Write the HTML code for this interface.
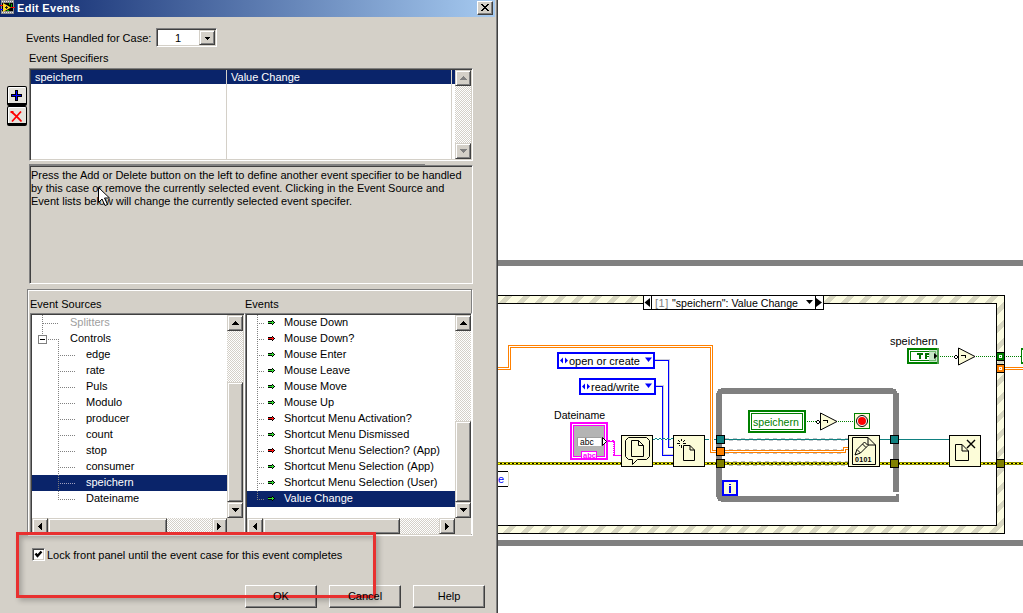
<!DOCTYPE html>
<html><head><meta charset="utf-8"><style>
*{margin:0;padding:0;box-sizing:border-box}
html,body{width:1023px;height:613px;overflow:hidden;background:#fff}
body{position:relative;font-family:"Liberation Sans",sans-serif;font-size:11px;color:#000}
.a{position:absolute}
.t{position:absolute;white-space:nowrap;line-height:13px}
#dlg{position:absolute;left:0;top:0;width:498px;height:613px;background:#d4d0c8;overflow:hidden}
#diag{position:absolute;left:498px;top:0;width:525px;height:613px;background:#fff;overflow:hidden}
#title{position:absolute;left:0;top:0;width:495px;height:17px;background:linear-gradient(to right,#0a246a,#a6caf0)}
.raised{background:#d4d0c8;border-style:solid;border-width:1px;border-color:#d4d0c8 #404040 #404040 #d4d0c8;box-shadow:inset 1px 1px 0 #fff,inset -1px -1px 0 #808080}
.sunken{border-style:solid;border-width:1px;border-color:#808080 #fff #fff #808080;box-shadow:inset 1px 1px 0 #404040,inset -1px -1px 0 #d4d0c8}
.track{background-image:repeating-conic-gradient(#fff 0 25%,#d4d0c8 0 50%);background-size:2px 2px}
.sel{background:#0a246a}
.btn{position:absolute;background:#d4d0c8;border-style:solid;border-width:1px;border-color:#fff #404040 #404040 #fff;box-shadow:inset -1px -1px 0 #808080;text-align:center;line-height:22px}
</style></head><body>
<div id="dlg">
  <div id="title"></div>
  <svg class="a" style="left:0;top:0" width="16" height="16" shape-rendering="crispEdges">
    <rect x="1" y="0" width="13" height="14" fill="#8c8c8c"/>
    <g fill="#e8e8f0"><rect x="2" y="1" width="1" height="1"/><rect x="4" y="1" width="1" height="1"/><rect x="6" y="1" width="1" height="1"/><rect x="8" y="1" width="1" height="1"/><rect x="10" y="1" width="1" height="1"/><rect x="12" y="1" width="1" height="1"/>
    <rect x="2" y="12" width="1" height="1"/><rect x="4" y="12" width="1" height="1"/><rect x="6" y="12" width="1" height="1"/><rect x="8" y="12" width="1" height="1"/><rect x="10" y="12" width="1" height="1"/><rect x="12" y="12" width="1" height="1"/></g>
    <rect x="2" y="3" width="11" height="8" fill="#000"/>
    <path d="M3 3 L11 7.5 L3 12 Z" fill="#ffd820" shape-rendering="auto"/>
    <rect x="6" y="6" width="1" height="3" fill="#222"/><rect x="5" y="7" width="3" height="1" fill="#222"/>
    <rect x="9" y="3" width="1" height="2" fill="#0a0"/><rect x="11" y="4" width="1" height="3" fill="#0a0"/><rect x="7" y="10" width="2" height="1" fill="#0a0"/>
    <rect x="0" y="5" width="3" height="1" fill="#f00"/><rect x="0" y="9" width="3" height="1" fill="#00f"/><rect x="11" y="7" width="4" height="1" fill="#f00"/>
  </svg>
  <div class="t" style="left:17px;top:2px;color:#fff;font-weight:bold;letter-spacing:0.3px">Edit Events</div>
  <div class="a" style="left:477px;top:1px;width:16px;height:14px;background:#d4d0c8;border-style:solid;border-width:1px;border-color:#fff #404040 #404040 #fff;box-shadow:inset -1px -1px 0 #808080"></div>
  <svg class="a" style="left:481px;top:4px" width="8" height="7" shape-rendering="crispEdges"><rect x="0" y="0" width="2" height="1"/><rect x="6" y="0" width="2" height="1"/><rect x="1" y="1" width="2" height="1"/><rect x="5" y="1" width="2" height="1"/><rect x="2" y="2" width="4" height="1"/><rect x="3" y="3" width="2" height="1"/><rect x="2" y="4" width="4" height="1"/><rect x="1" y="5" width="2" height="1"/><rect x="5" y="5" width="2" height="1"/><rect x="0" y="6" width="2" height="1"/><rect x="6" y="6" width="2" height="1"/></svg>
  <div class="a" style="left:495px;top:0;width:1px;height:613px;background:#d4d0c8"></div>
  <div class="a" style="left:496px;top:0;width:1px;height:613px;background:#808080"></div>
  <div class="a" style="left:497px;top:0;width:1px;height:613px;background:#404040"></div>

  <div class="t" style="left:26px;top:32px">Events Handled for Case:</div>
  <div class="a sunken" style="left:156px;top:28px;width:61px;height:19px;background:#fff"></div>
  <div class="t" style="left:175px;top:32px">1</div>
  <div class="a raised" style="left:199px;top:30px;width:16px;height:15px"></div>
  <div class="t" style="left:29px;top:52px">Event Specifiers</div>

  <div class="a" style="left:7px;top:86px;width:20px;height:20px;border:1px solid #000;border-bottom-width:3px;border-radius:2px;background:#e4e2dc;box-shadow:inset 1px 1px 0 #fff"></div>
  <div class="a" style="left:7px;top:106px;width:20px;height:20px;border:1px solid #000;border-bottom-width:3px;border-radius:2px;background:#e4e2dc;box-shadow:inset 1px 1px 0 #fff"></div>
  <svg class="a" style="left:0;top:0" width="30" height="130" shape-rendering="crispEdges"><path d="M15 90 h3 v4 h4 v3 h-4 v4 h-3 v-4 h-4 v-3 h4 z" fill="#000"/><path d="M16 91 h1 v4 h4 v1 h-4 v4 h-1 v-4 h-4 v-1 h4 z" fill="#0000ff"/></svg>
  <svg class="a" style="left:10px;top:110px" width="14" height="13"><path d="M1.5 2 Q5 4.5 11.5 11.5 M11 1.5 L2 11.5" stroke="#ff0000" stroke-width="1.8"/><rect x="0.5" y="1" width="3" height="2" fill="#ff0000"/></svg>

  <div class="a sunken" style="left:29px;top:68px;width:444px;height:93px;background:#fff"></div>
  <div class="a sel" style="left:31px;top:70px;width:424px;height:14px"></div>
  <div class="a" style="left:226px;top:70px;width:1px;height:89px;background:#d4d0c8"></div>
  <div class="a" style="left:451px;top:70px;width:1px;height:89px;background:#d4d0c8"></div>
  <div class="t" style="left:35px;top:71px;color:#fff">speichern</div>
  <div class="t" style="left:231px;top:71px;color:#fff">Value Change</div>
  <div class="a track" style="left:455px;top:70px;width:16px;height:89px"></div>
  <div class="a raised" style="left:455px;top:70px;width:16px;height:16px"></div>
  <div class="a raised" style="left:455px;top:143px;width:16px;height:16px"></div>

  <div class="a sunken" style="left:29px;top:165px;width:444px;height:119px;background:#d4d0c8"></div><div class="a" style="left:29px;top:164px;width:396px;height:1px;background:#808080"></div>
  <div class="t" style="left:31px;top:169px;line-height:13px">Press the Add or Delete button on the left to define another event specifier to be handled<br>by this case or remove the currently selected event. Clicking in the Event Source and<br>Event lists below will change the currently selected event specifer.</div>

  <div class="a" style="left:27px;top:289px;width:445px;height:246px;border:1px solid #808080;border-bottom-color:#d4d0c8;box-shadow:inset 1px 1px 0 #fff, 1px 1px 0 #fff"></div>
  <div class="t" style="left:30px;top:298px">Event Sources</div>
  <div class="t" style="left:245px;top:298px">Events</div>

  <div class="a sunken" style="left:30px;top:313px;width:215px;height:221px;background:#fff"></div><div class="a sel" style="left:32px;top:475px;width:195px;height:16px"></div><div class="t" style="left:70px;top:316px;color:#a0a0a0">Splitters</div><div class="t" style="left:70px;top:332px;color:#000">Controls</div><div class="t" style="left:86px;top:348px;color:#000">edge</div><div class="t" style="left:86px;top:364px;color:#000">rate</div><div class="t" style="left:86px;top:380px;color:#000">Puls</div><div class="t" style="left:86px;top:396px;color:#000">Modulo</div><div class="t" style="left:86px;top:412px;color:#000">producer</div><div class="t" style="left:86px;top:428px;color:#000">count</div><div class="t" style="left:86px;top:444px;color:#000">stop</div><div class="t" style="left:86px;top:460px;color:#000">consumer</div><div class="t" style="left:86px;top:476px;color:#fff">speichern</div><div class="t" style="left:86px;top:492px;color:#000">Dateiname</div><div class="a track" style="left:227px;top:315px;width:16px;height:203px"></div><div class="a raised" style="left:227px;top:315px;width:16px;height:16px;"></div><div class="a raised" style="left:227px;top:382px;width:16px;height:120px;"></div><div class="a raised" style="left:227px;top:502px;width:16px;height:16px;"></div><div class="a track" style="left:32px;top:518px;width:195px;height:16px"></div><div class="a raised" style="left:32px;top:518px;width:16px;height:16px;"></div><div class="a raised" style="left:48px;top:518px;width:119px;height:16px;"></div><div class="a raised" style="left:212px;top:518px;width:15px;height:16px;"></div><div class="a" style="left:227px;top:518px;width:16px;height:16px;background:#d4d0c8"></div><div class="a sunken" style="left:245px;top:313px;width:227px;height:221px;background:#fff"></div><div class="a sel" style="left:247px;top:491px;width:208px;height:16px"></div><svg class="a" style="left:268px;top:320px" width="7" height="5" shape-rendering="crispEdges"><rect x="4" y="0" width="1" height="1" fill="#000"/><rect x="0" y="1" width="1" height="1" fill="#000"/><rect x="1" y="1" width="1" height="1" fill="#000"/><rect x="2" y="1" width="1" height="1" fill="#000"/><rect x="3" y="1" width="1" height="1" fill="#000"/><rect x="4" y="1" width="1" height="1" fill="#33dd33"/><rect x="5" y="1" width="1" height="1" fill="#000"/><rect x="0" y="2" width="1" height="1" fill="#33dd33"/><rect x="1" y="2" width="1" height="1" fill="#33dd33"/><rect x="2" y="2" width="1" height="1" fill="#33dd33"/><rect x="3" y="2" width="1" height="1" fill="#33dd33"/><rect x="4" y="2" width="1" height="1" fill="#33dd33"/><rect x="5" y="2" width="1" height="1" fill="#33dd33"/><rect x="6" y="2" width="1" height="1" fill="#000"/><rect x="0" y="3" width="1" height="1" fill="#000"/><rect x="1" y="3" width="1" height="1" fill="#000"/><rect x="2" y="3" width="1" height="1" fill="#000"/><rect x="3" y="3" width="1" height="1" fill="#000"/><rect x="4" y="3" width="1" height="1" fill="#33dd33"/><rect x="5" y="3" width="1" height="1" fill="#000"/><rect x="4" y="4" width="1" height="1" fill="#000"/></svg><div class="t" style="left:284px;top:316px;color:#000">Mouse Down</div><svg class="a" style="left:268px;top:336px" width="7" height="5" shape-rendering="crispEdges"><rect x="4" y="0" width="1" height="1" fill="#000"/><rect x="0" y="1" width="1" height="1" fill="#000"/><rect x="1" y="1" width="1" height="1" fill="#000"/><rect x="2" y="1" width="1" height="1" fill="#000"/><rect x="3" y="1" width="1" height="1" fill="#000"/><rect x="4" y="1" width="1" height="1" fill="#ff1010"/><rect x="5" y="1" width="1" height="1" fill="#000"/><rect x="0" y="2" width="1" height="1" fill="#ff1010"/><rect x="1" y="2" width="1" height="1" fill="#ff1010"/><rect x="2" y="2" width="1" height="1" fill="#ff1010"/><rect x="3" y="2" width="1" height="1" fill="#ff1010"/><rect x="4" y="2" width="1" height="1" fill="#ff1010"/><rect x="5" y="2" width="1" height="1" fill="#ff1010"/><rect x="6" y="2" width="1" height="1" fill="#000"/><rect x="0" y="3" width="1" height="1" fill="#000"/><rect x="1" y="3" width="1" height="1" fill="#000"/><rect x="2" y="3" width="1" height="1" fill="#000"/><rect x="3" y="3" width="1" height="1" fill="#000"/><rect x="4" y="3" width="1" height="1" fill="#ff1010"/><rect x="5" y="3" width="1" height="1" fill="#000"/><rect x="4" y="4" width="1" height="1" fill="#000"/></svg><div class="t" style="left:284px;top:332px;color:#000">Mouse Down?</div><svg class="a" style="left:268px;top:352px" width="7" height="5" shape-rendering="crispEdges"><rect x="4" y="0" width="1" height="1" fill="#000"/><rect x="0" y="1" width="1" height="1" fill="#000"/><rect x="1" y="1" width="1" height="1" fill="#000"/><rect x="2" y="1" width="1" height="1" fill="#000"/><rect x="3" y="1" width="1" height="1" fill="#000"/><rect x="4" y="1" width="1" height="1" fill="#33dd33"/><rect x="5" y="1" width="1" height="1" fill="#000"/><rect x="0" y="2" width="1" height="1" fill="#33dd33"/><rect x="1" y="2" width="1" height="1" fill="#33dd33"/><rect x="2" y="2" width="1" height="1" fill="#33dd33"/><rect x="3" y="2" width="1" height="1" fill="#33dd33"/><rect x="4" y="2" width="1" height="1" fill="#33dd33"/><rect x="5" y="2" width="1" height="1" fill="#33dd33"/><rect x="6" y="2" width="1" height="1" fill="#000"/><rect x="0" y="3" width="1" height="1" fill="#000"/><rect x="1" y="3" width="1" height="1" fill="#000"/><rect x="2" y="3" width="1" height="1" fill="#000"/><rect x="3" y="3" width="1" height="1" fill="#000"/><rect x="4" y="3" width="1" height="1" fill="#33dd33"/><rect x="5" y="3" width="1" height="1" fill="#000"/><rect x="4" y="4" width="1" height="1" fill="#000"/></svg><div class="t" style="left:284px;top:348px;color:#000">Mouse Enter</div><svg class="a" style="left:268px;top:368px" width="7" height="5" shape-rendering="crispEdges"><rect x="4" y="0" width="1" height="1" fill="#000"/><rect x="0" y="1" width="1" height="1" fill="#000"/><rect x="1" y="1" width="1" height="1" fill="#000"/><rect x="2" y="1" width="1" height="1" fill="#000"/><rect x="3" y="1" width="1" height="1" fill="#000"/><rect x="4" y="1" width="1" height="1" fill="#33dd33"/><rect x="5" y="1" width="1" height="1" fill="#000"/><rect x="0" y="2" width="1" height="1" fill="#33dd33"/><rect x="1" y="2" width="1" height="1" fill="#33dd33"/><rect x="2" y="2" width="1" height="1" fill="#33dd33"/><rect x="3" y="2" width="1" height="1" fill="#33dd33"/><rect x="4" y="2" width="1" height="1" fill="#33dd33"/><rect x="5" y="2" width="1" height="1" fill="#33dd33"/><rect x="6" y="2" width="1" height="1" fill="#000"/><rect x="0" y="3" width="1" height="1" fill="#000"/><rect x="1" y="3" width="1" height="1" fill="#000"/><rect x="2" y="3" width="1" height="1" fill="#000"/><rect x="3" y="3" width="1" height="1" fill="#000"/><rect x="4" y="3" width="1" height="1" fill="#33dd33"/><rect x="5" y="3" width="1" height="1" fill="#000"/><rect x="4" y="4" width="1" height="1" fill="#000"/></svg><div class="t" style="left:284px;top:364px;color:#000">Mouse Leave</div><svg class="a" style="left:268px;top:384px" width="7" height="5" shape-rendering="crispEdges"><rect x="4" y="0" width="1" height="1" fill="#000"/><rect x="0" y="1" width="1" height="1" fill="#000"/><rect x="1" y="1" width="1" height="1" fill="#000"/><rect x="2" y="1" width="1" height="1" fill="#000"/><rect x="3" y="1" width="1" height="1" fill="#000"/><rect x="4" y="1" width="1" height="1" fill="#33dd33"/><rect x="5" y="1" width="1" height="1" fill="#000"/><rect x="0" y="2" width="1" height="1" fill="#33dd33"/><rect x="1" y="2" width="1" height="1" fill="#33dd33"/><rect x="2" y="2" width="1" height="1" fill="#33dd33"/><rect x="3" y="2" width="1" height="1" fill="#33dd33"/><rect x="4" y="2" width="1" height="1" fill="#33dd33"/><rect x="5" y="2" width="1" height="1" fill="#33dd33"/><rect x="6" y="2" width="1" height="1" fill="#000"/><rect x="0" y="3" width="1" height="1" fill="#000"/><rect x="1" y="3" width="1" height="1" fill="#000"/><rect x="2" y="3" width="1" height="1" fill="#000"/><rect x="3" y="3" width="1" height="1" fill="#000"/><rect x="4" y="3" width="1" height="1" fill="#33dd33"/><rect x="5" y="3" width="1" height="1" fill="#000"/><rect x="4" y="4" width="1" height="1" fill="#000"/></svg><div class="t" style="left:284px;top:380px;color:#000">Mouse Move</div><svg class="a" style="left:268px;top:400px" width="7" height="5" shape-rendering="crispEdges"><rect x="4" y="0" width="1" height="1" fill="#000"/><rect x="0" y="1" width="1" height="1" fill="#000"/><rect x="1" y="1" width="1" height="1" fill="#000"/><rect x="2" y="1" width="1" height="1" fill="#000"/><rect x="3" y="1" width="1" height="1" fill="#000"/><rect x="4" y="1" width="1" height="1" fill="#33dd33"/><rect x="5" y="1" width="1" height="1" fill="#000"/><rect x="0" y="2" width="1" height="1" fill="#33dd33"/><rect x="1" y="2" width="1" height="1" fill="#33dd33"/><rect x="2" y="2" width="1" height="1" fill="#33dd33"/><rect x="3" y="2" width="1" height="1" fill="#33dd33"/><rect x="4" y="2" width="1" height="1" fill="#33dd33"/><rect x="5" y="2" width="1" height="1" fill="#33dd33"/><rect x="6" y="2" width="1" height="1" fill="#000"/><rect x="0" y="3" width="1" height="1" fill="#000"/><rect x="1" y="3" width="1" height="1" fill="#000"/><rect x="2" y="3" width="1" height="1" fill="#000"/><rect x="3" y="3" width="1" height="1" fill="#000"/><rect x="4" y="3" width="1" height="1" fill="#33dd33"/><rect x="5" y="3" width="1" height="1" fill="#000"/><rect x="4" y="4" width="1" height="1" fill="#000"/></svg><div class="t" style="left:284px;top:396px;color:#000">Mouse Up</div><svg class="a" style="left:268px;top:416px" width="7" height="5" shape-rendering="crispEdges"><rect x="4" y="0" width="1" height="1" fill="#000"/><rect x="0" y="1" width="1" height="1" fill="#000"/><rect x="1" y="1" width="1" height="1" fill="#000"/><rect x="2" y="1" width="1" height="1" fill="#000"/><rect x="3" y="1" width="1" height="1" fill="#000"/><rect x="4" y="1" width="1" height="1" fill="#ff1010"/><rect x="5" y="1" width="1" height="1" fill="#000"/><rect x="0" y="2" width="1" height="1" fill="#ff1010"/><rect x="1" y="2" width="1" height="1" fill="#ff1010"/><rect x="2" y="2" width="1" height="1" fill="#ff1010"/><rect x="3" y="2" width="1" height="1" fill="#ff1010"/><rect x="4" y="2" width="1" height="1" fill="#ff1010"/><rect x="5" y="2" width="1" height="1" fill="#ff1010"/><rect x="6" y="2" width="1" height="1" fill="#000"/><rect x="0" y="3" width="1" height="1" fill="#000"/><rect x="1" y="3" width="1" height="1" fill="#000"/><rect x="2" y="3" width="1" height="1" fill="#000"/><rect x="3" y="3" width="1" height="1" fill="#000"/><rect x="4" y="3" width="1" height="1" fill="#ff1010"/><rect x="5" y="3" width="1" height="1" fill="#000"/><rect x="4" y="4" width="1" height="1" fill="#000"/></svg><div class="t" style="left:284px;top:412px;color:#000">Shortcut Menu Activation?</div><svg class="a" style="left:268px;top:432px" width="7" height="5" shape-rendering="crispEdges"><rect x="4" y="0" width="1" height="1" fill="#000"/><rect x="0" y="1" width="1" height="1" fill="#000"/><rect x="1" y="1" width="1" height="1" fill="#000"/><rect x="2" y="1" width="1" height="1" fill="#000"/><rect x="3" y="1" width="1" height="1" fill="#000"/><rect x="4" y="1" width="1" height="1" fill="#33dd33"/><rect x="5" y="1" width="1" height="1" fill="#000"/><rect x="0" y="2" width="1" height="1" fill="#33dd33"/><rect x="1" y="2" width="1" height="1" fill="#33dd33"/><rect x="2" y="2" width="1" height="1" fill="#33dd33"/><rect x="3" y="2" width="1" height="1" fill="#33dd33"/><rect x="4" y="2" width="1" height="1" fill="#33dd33"/><rect x="5" y="2" width="1" height="1" fill="#33dd33"/><rect x="6" y="2" width="1" height="1" fill="#000"/><rect x="0" y="3" width="1" height="1" fill="#000"/><rect x="1" y="3" width="1" height="1" fill="#000"/><rect x="2" y="3" width="1" height="1" fill="#000"/><rect x="3" y="3" width="1" height="1" fill="#000"/><rect x="4" y="3" width="1" height="1" fill="#33dd33"/><rect x="5" y="3" width="1" height="1" fill="#000"/><rect x="4" y="4" width="1" height="1" fill="#000"/></svg><div class="t" style="left:284px;top:428px;color:#000">Shortcut Menu Dismissed</div><svg class="a" style="left:268px;top:448px" width="7" height="5" shape-rendering="crispEdges"><rect x="4" y="0" width="1" height="1" fill="#000"/><rect x="0" y="1" width="1" height="1" fill="#000"/><rect x="1" y="1" width="1" height="1" fill="#000"/><rect x="2" y="1" width="1" height="1" fill="#000"/><rect x="3" y="1" width="1" height="1" fill="#000"/><rect x="4" y="1" width="1" height="1" fill="#ff1010"/><rect x="5" y="1" width="1" height="1" fill="#000"/><rect x="0" y="2" width="1" height="1" fill="#ff1010"/><rect x="1" y="2" width="1" height="1" fill="#ff1010"/><rect x="2" y="2" width="1" height="1" fill="#ff1010"/><rect x="3" y="2" width="1" height="1" fill="#ff1010"/><rect x="4" y="2" width="1" height="1" fill="#ff1010"/><rect x="5" y="2" width="1" height="1" fill="#ff1010"/><rect x="6" y="2" width="1" height="1" fill="#000"/><rect x="0" y="3" width="1" height="1" fill="#000"/><rect x="1" y="3" width="1" height="1" fill="#000"/><rect x="2" y="3" width="1" height="1" fill="#000"/><rect x="3" y="3" width="1" height="1" fill="#000"/><rect x="4" y="3" width="1" height="1" fill="#ff1010"/><rect x="5" y="3" width="1" height="1" fill="#000"/><rect x="4" y="4" width="1" height="1" fill="#000"/></svg><div class="t" style="left:284px;top:444px;color:#000">Shortcut Menu Selection? (App)</div><svg class="a" style="left:268px;top:464px" width="7" height="5" shape-rendering="crispEdges"><rect x="4" y="0" width="1" height="1" fill="#000"/><rect x="0" y="1" width="1" height="1" fill="#000"/><rect x="1" y="1" width="1" height="1" fill="#000"/><rect x="2" y="1" width="1" height="1" fill="#000"/><rect x="3" y="1" width="1" height="1" fill="#000"/><rect x="4" y="1" width="1" height="1" fill="#33dd33"/><rect x="5" y="1" width="1" height="1" fill="#000"/><rect x="0" y="2" width="1" height="1" fill="#33dd33"/><rect x="1" y="2" width="1" height="1" fill="#33dd33"/><rect x="2" y="2" width="1" height="1" fill="#33dd33"/><rect x="3" y="2" width="1" height="1" fill="#33dd33"/><rect x="4" y="2" width="1" height="1" fill="#33dd33"/><rect x="5" y="2" width="1" height="1" fill="#33dd33"/><rect x="6" y="2" width="1" height="1" fill="#000"/><rect x="0" y="3" width="1" height="1" fill="#000"/><rect x="1" y="3" width="1" height="1" fill="#000"/><rect x="2" y="3" width="1" height="1" fill="#000"/><rect x="3" y="3" width="1" height="1" fill="#000"/><rect x="4" y="3" width="1" height="1" fill="#33dd33"/><rect x="5" y="3" width="1" height="1" fill="#000"/><rect x="4" y="4" width="1" height="1" fill="#000"/></svg><div class="t" style="left:284px;top:460px;color:#000">Shortcut Menu Selection (App)</div><svg class="a" style="left:268px;top:480px" width="7" height="5" shape-rendering="crispEdges"><rect x="4" y="0" width="1" height="1" fill="#000"/><rect x="0" y="1" width="1" height="1" fill="#000"/><rect x="1" y="1" width="1" height="1" fill="#000"/><rect x="2" y="1" width="1" height="1" fill="#000"/><rect x="3" y="1" width="1" height="1" fill="#000"/><rect x="4" y="1" width="1" height="1" fill="#33dd33"/><rect x="5" y="1" width="1" height="1" fill="#000"/><rect x="0" y="2" width="1" height="1" fill="#33dd33"/><rect x="1" y="2" width="1" height="1" fill="#33dd33"/><rect x="2" y="2" width="1" height="1" fill="#33dd33"/><rect x="3" y="2" width="1" height="1" fill="#33dd33"/><rect x="4" y="2" width="1" height="1" fill="#33dd33"/><rect x="5" y="2" width="1" height="1" fill="#33dd33"/><rect x="6" y="2" width="1" height="1" fill="#000"/><rect x="0" y="3" width="1" height="1" fill="#000"/><rect x="1" y="3" width="1" height="1" fill="#000"/><rect x="2" y="3" width="1" height="1" fill="#000"/><rect x="3" y="3" width="1" height="1" fill="#000"/><rect x="4" y="3" width="1" height="1" fill="#33dd33"/><rect x="5" y="3" width="1" height="1" fill="#000"/><rect x="4" y="4" width="1" height="1" fill="#000"/></svg><div class="t" style="left:284px;top:476px;color:#000">Shortcut Menu Selection (User)</div><svg class="a" style="left:268px;top:496px" width="7" height="5" shape-rendering="crispEdges"><rect x="4" y="0" width="1" height="1" fill="#000"/><rect x="0" y="1" width="1" height="1" fill="#000"/><rect x="1" y="1" width="1" height="1" fill="#000"/><rect x="2" y="1" width="1" height="1" fill="#000"/><rect x="3" y="1" width="1" height="1" fill="#000"/><rect x="4" y="1" width="1" height="1" fill="#33dd33"/><rect x="5" y="1" width="1" height="1" fill="#000"/><rect x="0" y="2" width="1" height="1" fill="#33dd33"/><rect x="1" y="2" width="1" height="1" fill="#33dd33"/><rect x="2" y="2" width="1" height="1" fill="#33dd33"/><rect x="3" y="2" width="1" height="1" fill="#33dd33"/><rect x="4" y="2" width="1" height="1" fill="#33dd33"/><rect x="5" y="2" width="1" height="1" fill="#33dd33"/><rect x="6" y="2" width="1" height="1" fill="#000"/><rect x="0" y="3" width="1" height="1" fill="#000"/><rect x="1" y="3" width="1" height="1" fill="#000"/><rect x="2" y="3" width="1" height="1" fill="#000"/><rect x="3" y="3" width="1" height="1" fill="#000"/><rect x="4" y="3" width="1" height="1" fill="#33dd33"/><rect x="5" y="3" width="1" height="1" fill="#000"/><rect x="4" y="4" width="1" height="1" fill="#000"/></svg><div class="t" style="left:284px;top:492px;color:#fff">Value Change</div><div class="a track" style="left:455px;top:315px;width:16px;height:203px"></div><div class="a raised" style="left:455px;top:315px;width:16px;height:16px;"></div><div class="a raised" style="left:455px;top:421px;width:16px;height:81px;"></div><div class="a raised" style="left:455px;top:502px;width:16px;height:16px;"></div><div class="a track" style="left:247px;top:518px;width:208px;height:16px"></div><div class="a raised" style="left:247px;top:518px;width:16px;height:16px;"></div><div class="a raised" style="left:263px;top:518px;width:137px;height:16px;"></div><div class="a raised" style="left:439px;top:518px;width:16px;height:16px;"></div><div class="a" style="left:455px;top:518px;width:16px;height:16px;background:#d4d0c8"></div><svg class="a" style="left:0;top:0" width="498" height="613" shape-rendering="crispEdges"><rect x="42" y="315" width="1" height="1" fill="#808080"/><rect x="42" y="317" width="1" height="1" fill="#808080"/><rect x="42" y="319" width="1" height="1" fill="#808080"/><rect x="42" y="321" width="1" height="1" fill="#808080"/><rect x="42" y="323" width="1" height="1" fill="#808080"/><rect x="42" y="325" width="1" height="1" fill="#808080"/><rect x="42" y="327" width="1" height="1" fill="#808080"/><rect x="42" y="329" width="1" height="1" fill="#808080"/><rect x="42" y="331" width="1" height="1" fill="#808080"/><rect x="42" y="333" width="1" height="1" fill="#808080"/><rect x="43" y="323" width="1" height="1" fill="#808080"/><rect x="45" y="323" width="1" height="1" fill="#808080"/><rect x="47" y="323" width="1" height="1" fill="#808080"/><rect x="49" y="323" width="1" height="1" fill="#808080"/><rect x="51" y="323" width="1" height="1" fill="#808080"/><rect x="53" y="323" width="1" height="1" fill="#808080"/><rect x="55" y="323" width="1" height="1" fill="#808080"/><rect x="57" y="323" width="1" height="1" fill="#808080"/><rect x="38.5" y="335.5" width="8" height="8" fill="#fff" stroke="#808080" stroke-width="1"/><rect x="40" y="339" width="5" height="1" fill="#000"/><rect x="48" y="339" width="1" height="1" fill="#808080"/><rect x="50" y="339" width="1" height="1" fill="#808080"/><rect x="52" y="339" width="1" height="1" fill="#808080"/><rect x="54" y="339" width="1" height="1" fill="#808080"/><rect x="56" y="339" width="1" height="1" fill="#808080"/><rect x="58" y="339" width="1" height="1" fill="#808080"/><rect x="58" y="341" width="1" height="1" fill="#808080"/><rect x="58" y="343" width="1" height="1" fill="#808080"/><rect x="58" y="345" width="1" height="1" fill="#808080"/><rect x="58" y="347" width="1" height="1" fill="#808080"/><rect x="58" y="349" width="1" height="1" fill="#808080"/><rect x="58" y="351" width="1" height="1" fill="#808080"/><rect x="58" y="353" width="1" height="1" fill="#808080"/><rect x="58" y="355" width="1" height="1" fill="#808080"/><rect x="58" y="357" width="1" height="1" fill="#808080"/><rect x="58" y="359" width="1" height="1" fill="#808080"/><rect x="58" y="361" width="1" height="1" fill="#808080"/><rect x="58" y="363" width="1" height="1" fill="#808080"/><rect x="58" y="365" width="1" height="1" fill="#808080"/><rect x="58" y="367" width="1" height="1" fill="#808080"/><rect x="58" y="369" width="1" height="1" fill="#808080"/><rect x="58" y="371" width="1" height="1" fill="#808080"/><rect x="58" y="373" width="1" height="1" fill="#808080"/><rect x="58" y="375" width="1" height="1" fill="#808080"/><rect x="58" y="377" width="1" height="1" fill="#808080"/><rect x="58" y="379" width="1" height="1" fill="#808080"/><rect x="58" y="381" width="1" height="1" fill="#808080"/><rect x="58" y="383" width="1" height="1" fill="#808080"/><rect x="58" y="385" width="1" height="1" fill="#808080"/><rect x="58" y="387" width="1" height="1" fill="#808080"/><rect x="58" y="389" width="1" height="1" fill="#808080"/><rect x="58" y="391" width="1" height="1" fill="#808080"/><rect x="58" y="393" width="1" height="1" fill="#808080"/><rect x="58" y="395" width="1" height="1" fill="#808080"/><rect x="58" y="397" width="1" height="1" fill="#808080"/><rect x="58" y="399" width="1" height="1" fill="#808080"/><rect x="58" y="401" width="1" height="1" fill="#808080"/><rect x="58" y="403" width="1" height="1" fill="#808080"/><rect x="58" y="405" width="1" height="1" fill="#808080"/><rect x="58" y="407" width="1" height="1" fill="#808080"/><rect x="58" y="409" width="1" height="1" fill="#808080"/><rect x="58" y="411" width="1" height="1" fill="#808080"/><rect x="58" y="413" width="1" height="1" fill="#808080"/><rect x="58" y="415" width="1" height="1" fill="#808080"/><rect x="58" y="417" width="1" height="1" fill="#808080"/><rect x="58" y="419" width="1" height="1" fill="#808080"/><rect x="58" y="421" width="1" height="1" fill="#808080"/><rect x="58" y="423" width="1" height="1" fill="#808080"/><rect x="58" y="425" width="1" height="1" fill="#808080"/><rect x="58" y="427" width="1" height="1" fill="#808080"/><rect x="58" y="429" width="1" height="1" fill="#808080"/><rect x="58" y="431" width="1" height="1" fill="#808080"/><rect x="58" y="433" width="1" height="1" fill="#808080"/><rect x="58" y="435" width="1" height="1" fill="#808080"/><rect x="58" y="437" width="1" height="1" fill="#808080"/><rect x="58" y="439" width="1" height="1" fill="#808080"/><rect x="58" y="441" width="1" height="1" fill="#808080"/><rect x="58" y="443" width="1" height="1" fill="#808080"/><rect x="58" y="445" width="1" height="1" fill="#808080"/><rect x="58" y="447" width="1" height="1" fill="#808080"/><rect x="58" y="449" width="1" height="1" fill="#808080"/><rect x="58" y="451" width="1" height="1" fill="#808080"/><rect x="58" y="453" width="1" height="1" fill="#808080"/><rect x="58" y="455" width="1" height="1" fill="#808080"/><rect x="58" y="457" width="1" height="1" fill="#808080"/><rect x="58" y="459" width="1" height="1" fill="#808080"/><rect x="58" y="461" width="1" height="1" fill="#808080"/><rect x="58" y="463" width="1" height="1" fill="#808080"/><rect x="58" y="465" width="1" height="1" fill="#808080"/><rect x="58" y="467" width="1" height="1" fill="#808080"/><rect x="58" y="469" width="1" height="1" fill="#808080"/><rect x="58" y="471" width="1" height="1" fill="#808080"/><rect x="58" y="473" width="1" height="1" fill="#808080"/><rect x="58" y="475" width="1" height="1" fill="#808080"/><rect x="58" y="477" width="1" height="1" fill="#808080"/><rect x="58" y="479" width="1" height="1" fill="#808080"/><rect x="58" y="481" width="1" height="1" fill="#808080"/><rect x="58" y="483" width="1" height="1" fill="#808080"/><rect x="58" y="485" width="1" height="1" fill="#808080"/><rect x="58" y="487" width="1" height="1" fill="#808080"/><rect x="58" y="489" width="1" height="1" fill="#808080"/><rect x="58" y="491" width="1" height="1" fill="#808080"/><rect x="58" y="493" width="1" height="1" fill="#808080"/><rect x="58" y="495" width="1" height="1" fill="#808080"/><rect x="58" y="497" width="1" height="1" fill="#808080"/><rect x="58" y="499" width="1" height="1" fill="#808080"/><rect x="60" y="355" width="1" height="1" fill="#808080"/><rect x="62" y="355" width="1" height="1" fill="#808080"/><rect x="64" y="355" width="1" height="1" fill="#808080"/><rect x="66" y="355" width="1" height="1" fill="#808080"/><rect x="68" y="355" width="1" height="1" fill="#808080"/><rect x="70" y="355" width="1" height="1" fill="#808080"/><rect x="72" y="355" width="1" height="1" fill="#808080"/><rect x="74" y="355" width="1" height="1" fill="#808080"/><rect x="60" y="371" width="1" height="1" fill="#808080"/><rect x="62" y="371" width="1" height="1" fill="#808080"/><rect x="64" y="371" width="1" height="1" fill="#808080"/><rect x="66" y="371" width="1" height="1" fill="#808080"/><rect x="68" y="371" width="1" height="1" fill="#808080"/><rect x="70" y="371" width="1" height="1" fill="#808080"/><rect x="72" y="371" width="1" height="1" fill="#808080"/><rect x="74" y="371" width="1" height="1" fill="#808080"/><rect x="60" y="387" width="1" height="1" fill="#808080"/><rect x="62" y="387" width="1" height="1" fill="#808080"/><rect x="64" y="387" width="1" height="1" fill="#808080"/><rect x="66" y="387" width="1" height="1" fill="#808080"/><rect x="68" y="387" width="1" height="1" fill="#808080"/><rect x="70" y="387" width="1" height="1" fill="#808080"/><rect x="72" y="387" width="1" height="1" fill="#808080"/><rect x="74" y="387" width="1" height="1" fill="#808080"/><rect x="60" y="403" width="1" height="1" fill="#808080"/><rect x="62" y="403" width="1" height="1" fill="#808080"/><rect x="64" y="403" width="1" height="1" fill="#808080"/><rect x="66" y="403" width="1" height="1" fill="#808080"/><rect x="68" y="403" width="1" height="1" fill="#808080"/><rect x="70" y="403" width="1" height="1" fill="#808080"/><rect x="72" y="403" width="1" height="1" fill="#808080"/><rect x="74" y="403" width="1" height="1" fill="#808080"/><rect x="60" y="419" width="1" height="1" fill="#808080"/><rect x="62" y="419" width="1" height="1" fill="#808080"/><rect x="64" y="419" width="1" height="1" fill="#808080"/><rect x="66" y="419" width="1" height="1" fill="#808080"/><rect x="68" y="419" width="1" height="1" fill="#808080"/><rect x="70" y="419" width="1" height="1" fill="#808080"/><rect x="72" y="419" width="1" height="1" fill="#808080"/><rect x="74" y="419" width="1" height="1" fill="#808080"/><rect x="60" y="435" width="1" height="1" fill="#808080"/><rect x="62" y="435" width="1" height="1" fill="#808080"/><rect x="64" y="435" width="1" height="1" fill="#808080"/><rect x="66" y="435" width="1" height="1" fill="#808080"/><rect x="68" y="435" width="1" height="1" fill="#808080"/><rect x="70" y="435" width="1" height="1" fill="#808080"/><rect x="72" y="435" width="1" height="1" fill="#808080"/><rect x="74" y="435" width="1" height="1" fill="#808080"/><rect x="60" y="451" width="1" height="1" fill="#808080"/><rect x="62" y="451" width="1" height="1" fill="#808080"/><rect x="64" y="451" width="1" height="1" fill="#808080"/><rect x="66" y="451" width="1" height="1" fill="#808080"/><rect x="68" y="451" width="1" height="1" fill="#808080"/><rect x="70" y="451" width="1" height="1" fill="#808080"/><rect x="72" y="451" width="1" height="1" fill="#808080"/><rect x="74" y="451" width="1" height="1" fill="#808080"/><rect x="60" y="467" width="1" height="1" fill="#808080"/><rect x="62" y="467" width="1" height="1" fill="#808080"/><rect x="64" y="467" width="1" height="1" fill="#808080"/><rect x="66" y="467" width="1" height="1" fill="#808080"/><rect x="68" y="467" width="1" height="1" fill="#808080"/><rect x="70" y="467" width="1" height="1" fill="#808080"/><rect x="72" y="467" width="1" height="1" fill="#808080"/><rect x="74" y="467" width="1" height="1" fill="#808080"/><rect x="60" y="483" width="1" height="1" fill="#a0a0c0"/><rect x="62" y="483" width="1" height="1" fill="#a0a0c0"/><rect x="64" y="483" width="1" height="1" fill="#a0a0c0"/><rect x="66" y="483" width="1" height="1" fill="#a0a0c0"/><rect x="68" y="483" width="1" height="1" fill="#a0a0c0"/><rect x="70" y="483" width="1" height="1" fill="#a0a0c0"/><rect x="72" y="483" width="1" height="1" fill="#a0a0c0"/><rect x="74" y="483" width="1" height="1" fill="#a0a0c0"/><rect x="60" y="499" width="1" height="1" fill="#808080"/><rect x="62" y="499" width="1" height="1" fill="#808080"/><rect x="64" y="499" width="1" height="1" fill="#808080"/><rect x="66" y="499" width="1" height="1" fill="#808080"/><rect x="68" y="499" width="1" height="1" fill="#808080"/><rect x="70" y="499" width="1" height="1" fill="#808080"/><rect x="72" y="499" width="1" height="1" fill="#808080"/><rect x="74" y="499" width="1" height="1" fill="#808080"/><rect x="257" y="315" width="1" height="1" fill="#808080"/><rect x="257" y="317" width="1" height="1" fill="#808080"/><rect x="257" y="319" width="1" height="1" fill="#808080"/><rect x="257" y="321" width="1" height="1" fill="#808080"/><rect x="257" y="323" width="1" height="1" fill="#808080"/><rect x="257" y="325" width="1" height="1" fill="#808080"/><rect x="257" y="327" width="1" height="1" fill="#808080"/><rect x="257" y="329" width="1" height="1" fill="#808080"/><rect x="257" y="331" width="1" height="1" fill="#808080"/><rect x="257" y="333" width="1" height="1" fill="#808080"/><rect x="257" y="335" width="1" height="1" fill="#808080"/><rect x="257" y="337" width="1" height="1" fill="#808080"/><rect x="257" y="339" width="1" height="1" fill="#808080"/><rect x="257" y="341" width="1" height="1" fill="#808080"/><rect x="257" y="343" width="1" height="1" fill="#808080"/><rect x="257" y="345" width="1" height="1" fill="#808080"/><rect x="257" y="347" width="1" height="1" fill="#808080"/><rect x="257" y="349" width="1" height="1" fill="#808080"/><rect x="257" y="351" width="1" height="1" fill="#808080"/><rect x="257" y="353" width="1" height="1" fill="#808080"/><rect x="257" y="355" width="1" height="1" fill="#808080"/><rect x="257" y="357" width="1" height="1" fill="#808080"/><rect x="257" y="359" width="1" height="1" fill="#808080"/><rect x="257" y="361" width="1" height="1" fill="#808080"/><rect x="257" y="363" width="1" height="1" fill="#808080"/><rect x="257" y="365" width="1" height="1" fill="#808080"/><rect x="257" y="367" width="1" height="1" fill="#808080"/><rect x="257" y="369" width="1" height="1" fill="#808080"/><rect x="257" y="371" width="1" height="1" fill="#808080"/><rect x="257" y="373" width="1" height="1" fill="#808080"/><rect x="257" y="375" width="1" height="1" fill="#808080"/><rect x="257" y="377" width="1" height="1" fill="#808080"/><rect x="257" y="379" width="1" height="1" fill="#808080"/><rect x="257" y="381" width="1" height="1" fill="#808080"/><rect x="257" y="383" width="1" height="1" fill="#808080"/><rect x="257" y="385" width="1" height="1" fill="#808080"/><rect x="257" y="387" width="1" height="1" fill="#808080"/><rect x="257" y="389" width="1" height="1" fill="#808080"/><rect x="257" y="391" width="1" height="1" fill="#808080"/><rect x="257" y="393" width="1" height="1" fill="#808080"/><rect x="257" y="395" width="1" height="1" fill="#808080"/><rect x="257" y="397" width="1" height="1" fill="#808080"/><rect x="257" y="399" width="1" height="1" fill="#808080"/><rect x="257" y="401" width="1" height="1" fill="#808080"/><rect x="257" y="403" width="1" height="1" fill="#808080"/><rect x="257" y="405" width="1" height="1" fill="#808080"/><rect x="257" y="407" width="1" height="1" fill="#808080"/><rect x="257" y="409" width="1" height="1" fill="#808080"/><rect x="257" y="411" width="1" height="1" fill="#808080"/><rect x="257" y="413" width="1" height="1" fill="#808080"/><rect x="257" y="415" width="1" height="1" fill="#808080"/><rect x="257" y="417" width="1" height="1" fill="#808080"/><rect x="257" y="419" width="1" height="1" fill="#808080"/><rect x="257" y="421" width="1" height="1" fill="#808080"/><rect x="257" y="423" width="1" height="1" fill="#808080"/><rect x="257" y="425" width="1" height="1" fill="#808080"/><rect x="257" y="427" width="1" height="1" fill="#808080"/><rect x="257" y="429" width="1" height="1" fill="#808080"/><rect x="257" y="431" width="1" height="1" fill="#808080"/><rect x="257" y="433" width="1" height="1" fill="#808080"/><rect x="257" y="435" width="1" height="1" fill="#808080"/><rect x="257" y="437" width="1" height="1" fill="#808080"/><rect x="257" y="439" width="1" height="1" fill="#808080"/><rect x="257" y="441" width="1" height="1" fill="#808080"/><rect x="257" y="443" width="1" height="1" fill="#808080"/><rect x="257" y="445" width="1" height="1" fill="#808080"/><rect x="257" y="447" width="1" height="1" fill="#808080"/><rect x="257" y="449" width="1" height="1" fill="#808080"/><rect x="257" y="451" width="1" height="1" fill="#808080"/><rect x="257" y="453" width="1" height="1" fill="#808080"/><rect x="257" y="455" width="1" height="1" fill="#808080"/><rect x="257" y="457" width="1" height="1" fill="#808080"/><rect x="257" y="459" width="1" height="1" fill="#808080"/><rect x="257" y="461" width="1" height="1" fill="#808080"/><rect x="257" y="463" width="1" height="1" fill="#808080"/><rect x="257" y="465" width="1" height="1" fill="#808080"/><rect x="257" y="467" width="1" height="1" fill="#808080"/><rect x="257" y="469" width="1" height="1" fill="#808080"/><rect x="257" y="471" width="1" height="1" fill="#808080"/><rect x="257" y="473" width="1" height="1" fill="#808080"/><rect x="257" y="475" width="1" height="1" fill="#808080"/><rect x="257" y="477" width="1" height="1" fill="#808080"/><rect x="257" y="479" width="1" height="1" fill="#808080"/><rect x="257" y="481" width="1" height="1" fill="#808080"/><rect x="257" y="483" width="1" height="1" fill="#808080"/><rect x="257" y="485" width="1" height="1" fill="#808080"/><rect x="257" y="487" width="1" height="1" fill="#808080"/><rect x="257" y="489" width="1" height="1" fill="#808080"/><rect x="257" y="491" width="1" height="1" fill="#808080"/><rect x="257" y="493" width="1" height="1" fill="#808080"/><rect x="257" y="495" width="1" height="1" fill="#808080"/><rect x="257" y="497" width="1" height="1" fill="#808080"/><rect x="257" y="499" width="1" height="1" fill="#808080"/><rect x="259" y="323" width="1" height="1" fill="#808080"/><rect x="261" y="323" width="1" height="1" fill="#808080"/><rect x="263" y="323" width="1" height="1" fill="#808080"/><rect x="259" y="339" width="1" height="1" fill="#808080"/><rect x="261" y="339" width="1" height="1" fill="#808080"/><rect x="263" y="339" width="1" height="1" fill="#808080"/><rect x="259" y="355" width="1" height="1" fill="#808080"/><rect x="261" y="355" width="1" height="1" fill="#808080"/><rect x="263" y="355" width="1" height="1" fill="#808080"/><rect x="259" y="371" width="1" height="1" fill="#808080"/><rect x="261" y="371" width="1" height="1" fill="#808080"/><rect x="263" y="371" width="1" height="1" fill="#808080"/><rect x="259" y="387" width="1" height="1" fill="#808080"/><rect x="261" y="387" width="1" height="1" fill="#808080"/><rect x="263" y="387" width="1" height="1" fill="#808080"/><rect x="259" y="403" width="1" height="1" fill="#808080"/><rect x="261" y="403" width="1" height="1" fill="#808080"/><rect x="263" y="403" width="1" height="1" fill="#808080"/><rect x="259" y="419" width="1" height="1" fill="#808080"/><rect x="261" y="419" width="1" height="1" fill="#808080"/><rect x="263" y="419" width="1" height="1" fill="#808080"/><rect x="259" y="435" width="1" height="1" fill="#808080"/><rect x="261" y="435" width="1" height="1" fill="#808080"/><rect x="263" y="435" width="1" height="1" fill="#808080"/><rect x="259" y="451" width="1" height="1" fill="#808080"/><rect x="261" y="451" width="1" height="1" fill="#808080"/><rect x="263" y="451" width="1" height="1" fill="#808080"/><rect x="259" y="467" width="1" height="1" fill="#808080"/><rect x="261" y="467" width="1" height="1" fill="#808080"/><rect x="263" y="467" width="1" height="1" fill="#808080"/><rect x="259" y="483" width="1" height="1" fill="#808080"/><rect x="261" y="483" width="1" height="1" fill="#808080"/><rect x="263" y="483" width="1" height="1" fill="#808080"/><rect x="259" y="499" width="1" height="1" fill="#808080"/><rect x="261" y="499" width="1" height="1" fill="#808080"/><rect x="263" y="499" width="1" height="1" fill="#808080"/></svg><svg class="a" style="left:0;top:0" width="498" height="613" shape-rendering="crispEdges"><rect x="232" y="324" width="7" height="1" fill="#000"/><rect x="233" y="323" width="5" height="1" fill="#000"/><rect x="234" y="322" width="3" height="1" fill="#000"/><rect x="235" y="321" width="1" height="1" fill="#000"/><rect x="232" y="508" width="7" height="1" fill="#000"/><rect x="233" y="509" width="5" height="1" fill="#000"/><rect x="234" y="510" width="3" height="1" fill="#000"/><rect x="235" y="511" width="1" height="1" fill="#000"/><rect x="41" y="523" width="1" height="7" fill="#000"/><rect x="40" y="524" width="1" height="5" fill="#000"/><rect x="39" y="525" width="1" height="3" fill="#000"/><rect x="38" y="526" width="1" height="1" fill="#000"/><rect x="217" y="523" width="1" height="7" fill="#000"/><rect x="218" y="524" width="1" height="5" fill="#000"/><rect x="219" y="525" width="1" height="3" fill="#000"/><rect x="220" y="526" width="1" height="1" fill="#000"/><rect x="460" y="324" width="7" height="1" fill="#000"/><rect x="461" y="323" width="5" height="1" fill="#000"/><rect x="462" y="322" width="3" height="1" fill="#000"/><rect x="463" y="321" width="1" height="1" fill="#000"/><rect x="460" y="508" width="7" height="1" fill="#000"/><rect x="461" y="509" width="5" height="1" fill="#000"/><rect x="462" y="510" width="3" height="1" fill="#000"/><rect x="463" y="511" width="1" height="1" fill="#000"/><rect x="256" y="523" width="1" height="7" fill="#000"/><rect x="255" y="524" width="1" height="5" fill="#000"/><rect x="254" y="525" width="1" height="3" fill="#000"/><rect x="253" y="526" width="1" height="1" fill="#000"/><rect x="445" y="523" width="1" height="7" fill="#000"/><rect x="446" y="524" width="1" height="5" fill="#000"/><rect x="447" y="525" width="1" height="3" fill="#000"/><rect x="448" y="526" width="1" height="1" fill="#000"/><rect x="460" y="79" width="7" height="1" fill="#808080"/><rect x="461" y="78" width="5" height="1" fill="#808080"/><rect x="462" y="77" width="3" height="1" fill="#808080"/><rect x="463" y="76" width="1" height="1" fill="#808080"/><rect x="460" y="149" width="7" height="1" fill="#808080"/><rect x="461" y="150" width="5" height="1" fill="#808080"/><rect x="462" y="151" width="3" height="1" fill="#808080"/><rect x="463" y="152" width="1" height="1" fill="#808080"/><rect x="205" y="37" width="5" height="1" fill="#000"/><rect x="206" y="38" width="3" height="1" fill="#000"/><rect x="207" y="39" width="1" height="1" fill="#000"/></svg>

  <svg class="a" style="left:97px;top:186px" width="14" height="22"><path d="M1.5 1.5 V16.5 L5 13 L8 19.5 L10.5 18.5 L7.5 12 H12.5 Z" fill="#fff" stroke="#000" stroke-width="1" stroke-linejoin="miter"/></svg>
  <div class="a sunken" style="left:32px;top:548px;width:13px;height:13px;background:#fff"></div>
  <svg class="a" style="left:34px;top:550px" width="9" height="9"><path d="M1.5 3.5 L3.5 6 L7.5 1.5" fill="none" stroke="#000" stroke-width="2.4"/></svg>
  <div class="t" style="left:47px;top:549px">Lock front panel until the event case for this event completes</div>

  <div class="btn" style="left:245px;top:585px;width:72px;height:23px"></div>
  <div class="btn" style="left:329px;top:585px;width:72px;height:23px"></div>
  <div class="btn" style="left:413px;top:585px;width:72px;height:23px"></div>

  <div class="a" style="left:16px;top:532px;width:360px;height:66px;border:3px solid #e83030;box-shadow:inset 3px 3px 5px rgba(0,0,0,0.22), 3px 3px 5px rgba(0,0,0,0.22)"></div>
  <div class="t" style="left:245px;top:590px;width:72px;text-align:center">OK</div>
  <div class="t" style="left:329px;top:590px;width:72px;text-align:center">Cancel</div>
  <div class="t" style="left:413px;top:590px;width:72px;text-align:center">Help</div>
</div>
<div id="diag"><svg class="a" style="left:0;top:0" width="525" height="613" viewBox="498 0 525 613" shape-rendering="crispEdges"><defs>
<pattern id="stripe" patternUnits="userSpaceOnUse" width="18" height="18" x="0" y="0">
<rect width="18" height="18" fill="#fcfce2"/>
<path d="M9 0 H16 L0 16 V9 Z M18 9 V16 L16 18 H9 Z" fill="#d8d7c1"/>
</pattern>
</defs><rect x="498" y="260" width="525" height="6" fill="#808080" /><rect x="498" y="540" width="525" height="6" fill="#808080" /><rect x="498" y="295" width="507" height="9" fill="url(#stripe)" /><rect x="498" y="525" width="507" height="9" fill="url(#stripe)" /><rect x="996" y="295" width="9" height="239" fill="url(#stripe)" /><rect x="498" y="295" width="507" height="1" fill="#000" /><rect x="498" y="303" width="499" height="1" fill="#000" /><rect x="498" y="525" width="499" height="1" fill="#000" /><rect x="498" y="533" width="507" height="1" fill="#000" /><rect x="1004" y="295" width="1" height="239" fill="#000" /><rect x="996" y="303" width="1" height="223" fill="#000" /><rect x="643" y="295" width="181" height="15" fill="#fff" /><path d="M643.5 295.5 H823.5 V309.5 H643.5 Z M651.5 295.5 V309.5 M815.5 295.5 V309.5" fill="none" stroke="#000" stroke-width="1"/><polygon points="644.5,302.5 650,298 650,307" fill="#000" shape-rendering="auto"/><polygon points="816,298 822,302.5 816,307" fill="#000" shape-rendering="auto"/><polygon points="806,300 813,300 809.5,304" fill="#000" shape-rendering="auto"/><path d="M498 367.5 H508.5 V345.5 H712.5 V450.5 H716" fill="none" stroke="#ff8000" stroke-width="1"/><path d="M498 369.5 H510.5 V347.5 H710.5 V452.5 H716" fill="none" stroke="#ff8000" stroke-width="1"/><path d="M655 359.5 H669.5 V446.5 H673 M656 385.5 H663.5 V454.5 H673" fill="none" stroke="#d0d0d8" stroke-width="1"/><path d="M655 360.5 H668.5 V447.5 H673" fill="none" stroke="#0000ff" stroke-width="1"/><path d="M656 386.5 H662.5 V455.5 H673" fill="none" stroke="#0000ff" stroke-width="1"/><path d="M607 441.5 H614.5 V455.5 H621" fill="none" stroke="#ff00ff" stroke-width="1"/><path d="M608 440.5 H614 M613 455.5 H621" fill="none" stroke="#ff00ff" stroke-width="1" stroke-dasharray="2 2"/><path d="M613.5 442 V456" fill="none" stroke="#ff00ff" stroke-width="1" stroke-dasharray="1 1"/><path d="M653 439.5 H673" fill="none" stroke="#108888" stroke-width="1" stroke-dasharray="2 2"/><path d="M655 438.5 H673" fill="none" stroke="#108888" stroke-width="1" stroke-dasharray="2 2"/><path d="M705 439.5 H709 M714 439.5 H716 M725 439.5 H848 M880 439.5 H949" fill="none" stroke="#0f8080" stroke-width="1"/><path d="M725 438.5 H848 M729 449.5 H843 M725 461.5 H848" fill="none" stroke="#c0c4c8" stroke-width="1" stroke-dasharray="4 4"/><path d="M729 440.5 H848 M725 453.5 H845 M729 465.5 H848" fill="none" stroke="#c0c4c8" stroke-width="1" stroke-dasharray="4 4"/><path d="M725 450.5 H843.5 V447.5 H848" fill="none" stroke="#ff8000" stroke-width="1"/><path d="M725 452.5 H845.5 V449.5 H848" fill="none" stroke="#ff8000" stroke-width="1"/><path d="M1005 367.5 H1023 M1005 369.5 H1023" fill="none" stroke="#ff8000" stroke-width="1"/><rect x="498" y="462" width="123" height="3" fill="#8c8c00" /><path d="M498 463.5 H621" stroke="#ffff00" stroke-width="1" stroke-dasharray="2 2"/><path d="M500 463.5 H621" stroke="#000" stroke-width="1" stroke-dasharray="2 2"/><rect x="653" y="462" width="20" height="3" fill="#8c8c00" /><path d="M653 463.5 H673" stroke="#ffff00" stroke-width="1" stroke-dasharray="2 2"/><path d="M655 463.5 H673" stroke="#000" stroke-width="1" stroke-dasharray="2 2"/><rect x="705" y="462" width="143" height="3" fill="#8c8c00" /><path d="M705 463.5 H848" stroke="#ffff00" stroke-width="1" stroke-dasharray="2 2"/><path d="M707 463.5 H848" stroke="#000" stroke-width="1" stroke-dasharray="2 2"/><rect x="880" y="462" width="69" height="3" fill="#8c8c00" /><path d="M880 463.5 H949" stroke="#ffff00" stroke-width="1" stroke-dasharray="2 2"/><path d="M882 463.5 H949" stroke="#000" stroke-width="1" stroke-dasharray="2 2"/><rect x="981" y="462" width="42" height="3" fill="#8c8c00" /><path d="M981 463.5 H1023" stroke="#ffff00" stroke-width="1" stroke-dasharray="2 2"/><path d="M983 463.5 H1023" stroke="#000" stroke-width="1" stroke-dasharray="2 2"/><path d="M940 356.5 H954 M976 356.5 H997 M1006 356.5 H1021" stroke="#008000" stroke-width="1" stroke-dasharray="1 1"/><path d="M807 421.5 H816 M838 421.5 H854" stroke="#008000" stroke-width="1" stroke-dasharray="1 1"/><rect x="557" y="352" width="98" height="17" fill="#0000ff" /><rect x="559" y="354" width="94" height="13" fill="#fff" /><rect x="579" y="378" width="77" height="17" fill="#0000ff" /><rect x="581" y="380" width="73" height="13" fill="#fff" /><g fill="#0000ff" shape-rendering="auto"><polygon points="560,360.5 563,357.5 563,363.5"/><polygon points="568,360.5 565,357.5 565,363.5"/><polygon points="645,357.5 652,357.5 648.5,362"/><polygon points="582,386.5 585,383.5 585,389.5"/><polygon points="590,386.5 587,383.5 587,389.5"/><polygon points="645,383.5 652,383.5 648.5,388"/></g><rect x="570" y="422" width="38" height="38" fill="#ff00ff" /><rect x="572" y="424" width="34" height="34" fill="#fff" /><rect x="573" y="425" width="32" height="32" fill="#ff00ff" /><rect x="574" y="426" width="30" height="30" fill="#b4b4b4" /><rect x="577" y="437" width="24" height="9" fill="#a0a0a0" /><rect x="578" y="438" width="23" height="8" fill="#fff" /><polygon points="602.5,437.5 606.5,441.5 602.5,445.5" fill="#fff" stroke="#000" stroke-width="1" shape-rendering="auto"/><rect x="581" y="451" width="16" height="8" fill="#ff00ff" /><rect x="582" y="452" width="14" height="6" fill="#fff" /><text x="580" y="444.5" font-family="Liberation Sans" font-size="8.5" fill="#000">abc</text><text x="583" y="457.5" font-family="Liberation Sans" font-size="7.5" font-weight="bold" fill="#ff00ff">abc</text><rect x="621" y="435" width="32" height="32" fill="#000" /><rect x="622" y="436" width="30" height="30" fill="#fcfcd8" /><rect x="673" y="435" width="32" height="32" fill="#000" /><rect x="674" y="436" width="30" height="30" fill="#fcfcd8" /><rect x="848" y="435" width="32" height="32" fill="#000" /><rect x="849" y="436" width="30" height="30" fill="#fcfcd8" /><rect x="949" y="435" width="32" height="32" fill="#000" /><rect x="950" y="436" width="30" height="30" fill="#fcfcd8" /><g fill="none" stroke="#000" stroke-width="1" shape-rendering="auto"><path d="M628.5 437.5 H646.5 L649.5 440.5 V456.5 L646.5 459.5 H637.5 L632.5 464.5 V459.5 H628.5 L625.5 456.5 V440.5 Z"/><path d="M631.5 440.5 H638.5 L643.5 445.5 V456.5 H631.5 Z M638.5 440.5 V445.5 H643.5"/><path d="M683.5 445.5 H690 L694.5 450 V460.5 H683.5 Z M690 445.5 V450 H694.5"/><path d="M852.5 437.5 H868 L875.5 445 V464.5 H852.5 Z M868 437.5 V445 H875.5"/><path d="M857 449.5 L864.5 442 L868 445.5 L860.5 453 Z M857 449.5 L855 455 L860.5 453 M862.5 444 L866 447.5"/><path d="M955.5 444.5 H962 L968.5 451 V460.5 H955.5 Z M962 444.5 V451 H968.5"/><path d="M967 440 L975 448 M975 440 L967 448" stroke-width="1.4"/></g><text x="855" y="462" font-family="Liberation Sans" font-size="7" font-weight="bold" fill="#000" letter-spacing="0.3">0101</text><rect x="721" y="388" width="172" height="1" fill="#808080" /><rect x="718" y="389" width="178" height="2" fill="#808080" /><rect x="717" y="391" width="180" height="2" fill="#808080" /><rect x="716" y="393" width="183" height="1" fill="#808080" /><rect x="716" y="393" width="6" height="103" fill="#808080" /><rect x="893" y="393" width="6" height="99" fill="#808080" /><rect x="716" y="496" width="183" height="1" fill="#808080" /><rect x="717" y="497" width="182" height="2" fill="#808080" /><rect x="718" y="499" width="181" height="2" fill="#808080" /><rect x="721" y="501" width="178" height="1" fill="#808080" /><rect x="896" y="494" width="3" height="2" fill="#808080" /><rect x="716" y="435" width="9" height="9" fill="#000" /><rect x="717" y="436" width="7" height="7" fill="#0f8080" /><rect x="716" y="447" width="9" height="9" fill="#000" /><rect x="717" y="448" width="7" height="7" fill="#ff8000" /><rect x="716" y="459" width="9" height="9" fill="#000" /><rect x="717" y="460" width="7" height="7" fill="#808000" /><rect x="890" y="435" width="9" height="9" fill="#000" /><rect x="891" y="436" width="7" height="7" fill="#0f8080" /><rect x="890" y="459" width="9" height="9" fill="#000" /><rect x="891" y="460" width="7" height="7" fill="#808000" /><rect x="996" y="352" width="9" height="9" fill="#000" /><rect x="997" y="353" width="7" height="7" fill="#008000" /><rect x="999" y="355" width="3" height="3" fill="#fff" /><rect x="1000" y="356" width="1" height="1" fill="#008000" /><rect x="996" y="364" width="9" height="9" fill="#000" /><rect x="997" y="365" width="7" height="7" fill="#ff8000" /><rect x="999" y="367" width="3" height="3" fill="#fff" /><rect x="1000" y="368" width="1" height="1" fill="#ff8000" /><rect x="996" y="459" width="9" height="9" fill="#000" /><rect x="997" y="460" width="7" height="7" fill="#808000" /><rect x="678" y="440" width="1" height="1" fill="#000" /><rect x="679" y="441" width="1" height="1" fill="#000" /><rect x="684" y="440" width="1" height="1" fill="#000" /><rect x="683" y="441" width="1" height="1" fill="#000" /><rect x="677" y="443" width="3" height="1" fill="#000" /><rect x="683" y="443" width="3" height="1" fill="#000" /><rect x="679" y="445" width="1" height="1" fill="#000" /><rect x="681" y="445" width="1" height="3" fill="#000" /><rect x="681" y="439" width="1" height="2" fill="#000" /><rect x="722" y="480" width="16" height="16" fill="#0000ff" /><rect x="724" y="482" width="12" height="12" fill="#fcfcd8" /><rect x="729" y="484" width="2" height="1" fill="#0000ff" /><rect x="729" y="486" width="2" height="7" fill="#0000ff" /><rect x="748" y="410" width="58" height="23" fill="#008000" /><rect x="750" y="412" width="54" height="19" fill="#fff" /><rect x="751" y="413" width="52" height="17" fill="#008000" /><rect x="752" y="414" width="50" height="15" fill="#fff" /><polygon points="820.5,413 837,421.5 820.5,430" fill="#fcfcd8" stroke="#000" stroke-width="1" shape-rendering="auto"/><rect x="817" y="420" width="2" height="1" fill="#000" /><rect x="817" y="423" width="2" height="1" fill="#000" /><rect x="816" y="421" width="1" height="2" fill="#000" /><rect x="819" y="421" width="1" height="2" fill="#000" /><rect x="817" y="421" width="2" height="2" fill="#fff" /><rect x="823" y="420" width="5" height="1" fill="#000" /><rect x="827" y="420" width="1" height="3" fill="#000" /><polygon points="958.5,348 975,356.5 958.5,365" fill="#fcfcd8" stroke="#000" stroke-width="1" shape-rendering="auto"/><rect x="955" y="355" width="2" height="1" fill="#000" /><rect x="955" y="358" width="2" height="1" fill="#000" /><rect x="954" y="356" width="1" height="2" fill="#000" /><rect x="957" y="356" width="1" height="2" fill="#000" /><rect x="955" y="356" width="2" height="2" fill="#fff" /><rect x="961" y="355" width="5" height="1" fill="#000" /><rect x="965" y="355" width="1" height="3" fill="#000" /><rect x="854" y="413" width="16" height="16" fill="#008000" /><rect x="855" y="414" width="14" height="14" fill="#fcfcd8" /><circle cx="862" cy="421" r="5.5" fill="#fff" stroke="#000" stroke-width="1" shape-rendering="auto"/><circle cx="862" cy="421" r="4" fill="#ff0000" shape-rendering="auto"/><rect x="907" y="348" width="32" height="16" fill="#008000" /><rect x="909" y="350" width="28" height="12" fill="#fff" /><rect x="910" y="351" width="26" height="10" fill="#008000" /><rect x="911" y="352" width="24" height="8" fill="#fff" /><rect x="917" y="353" width="6" height="2" fill="#007000" /><rect x="919" y="355" width="2" height="4" fill="#007000" /><rect x="925" y="353" width="2" height="6" fill="#007000" /><rect x="927" y="353" width="3" height="2" fill="#007000" /><rect x="927" y="356" width="2" height="1" fill="#007000" /><rect x="929" y="350" width="10" height="12" fill="#bfe0bf" fill-opacity="0.85"/><rect x="929" y="351" width="7" height="1" fill="#70b870" /><rect x="929" y="360" width="7" height="1" fill="#70b870" /><rect x="935" y="351" width="1" height="10" fill="#70b870" /><rect x="937" y="348" width="2" height="16" fill="#50a050" /><polygon points="934,353 937.5,356 934,359" fill="#000" shape-rendering="auto"/><rect x="1021" y="348" width="2" height="16" fill="#008000" /><rect x="1022" y="350" width="1" height="12" fill="#fff" /><path d="M498 471.5 H508 M498 486.5 H508" stroke="#000" stroke-width="1"/><rect x="508" y="472" width="1" height="14" fill="#d8d8c0" /></svg><div class="t" style="left:157px;top:297px;color:#808080;letter-spacing:0.5px">[1]</div><div class="t" style="left:174px;top:297px;transform:scaleX(0.965);transform-origin:0 0">"speichern": Value Change</div><div class="t" style="left:71px;top:355px;">open or create</div><div class="t" style="left:93px;top:381px;">read/write</div><div class="t" style="left:56px;top:409px;transform:scaleX(0.96);transform-origin:0 0">Dateiname</div><div class="t" style="left:392px;top:335px;">speichern</div><div class="t" style="left:255px;top:416px;color:#008000;transform:scaleX(0.96);transform-origin:0 0">speichern</div><div class="t" style="left:0px;top:473px;color:#0000ff">e</div></div></body></html>
